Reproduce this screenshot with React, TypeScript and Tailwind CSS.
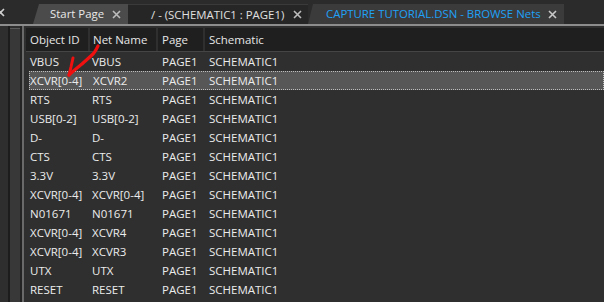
import React from "react";

type Row = { id: string; net: string; page: string; sch: string };

const rows: Row[] = [
  { id: "VBUS", net: "VBUS", page: "PAGE1", sch: "SCHEMATIC1" },
  { id: "XCVR[0-4]", net: "XCVR2", page: "PAGE1", sch: "SCHEMATIC1" },
  { id: "RTS", net: "RTS", page: "PAGE1", sch: "SCHEMATIC1" },
  { id: "USB[0-2]", net: "USB[0-2]", page: "PAGE1", sch: "SCHEMATIC1" },
  { id: "D-", net: "D-", page: "PAGE1", sch: "SCHEMATIC1" },
  { id: "CTS", net: "CTS", page: "PAGE1", sch: "SCHEMATIC1" },
  { id: "3.3V", net: "3.3V", page: "PAGE1", sch: "SCHEMATIC1" },
  { id: "XCVR[0-4]", net: "XCVR[0-4]", page: "PAGE1", sch: "SCHEMATIC1" },
  { id: "N01671", net: "N01671", page: "PAGE1", sch: "SCHEMATIC1" },
  { id: "XCVR[0-4]", net: "XCVR4", page: "PAGE1", sch: "SCHEMATIC1" },
  { id: "XCVR[0-4]", net: "XCVR3", page: "PAGE1", sch: "SCHEMATIC1" },
  { id: "UTX", net: "UTX", page: "PAGE1", sch: "SCHEMATIC1" },
  { id: "RESET", net: "RESET", page: "PAGE1", sch: "SCHEMATIC1" },
];

const Close = ({ className = "" }: { className?: string }) => (
  <svg width="9" height="9" viewBox="0 0 9 9" className={`shrink-0 ${className}`}>
    <path d="M1 1L8 8M8 1L1 8" stroke="currentColor" strokeWidth="1.6" />
  </svg>
);

const cols = "grid grid-cols-[62px_66px_45px_1fr]";

export default function App() {
  return (
    <div
      className="w-[604px] h-[302px] overflow-hidden bg-[#2d2d2d] text-[11.5px] flex flex-col"
      style={{ fontFamily: "'Open Sans', 'Noto Sans', sans-serif" }}
    >
      {/* tab strip */}
      <div className="h-[24px] flex items-end bg-[#2b2b2b] whitespace-nowrap">
        <div className="w-[33px] shrink-0 h-full flex items-start pt-[8px] text-[#cfcfcf]">
          <Close className="-ml-[4px]" />
        </div>
        <div className="h-[20px] w-[95px] shrink-0 bg-[#4b4b4b] flex items-center pl-[17px] pr-[6px] justify-between text-[#e8e8e8] [clip-path:polygon(6px_0,100%_0,100%_100%,0_100%)]">
          <span className="text-[11.4px]">Start Page</span>
          <Close className="text-[#bdbdbd] mr-[1px]" />
        </div>
        <div className="h-[20px] w-[180px] shrink-0 bg-[#262626] border-t border-[#3a3a3a] flex items-center pl-[23px] pr-[6px] justify-between text-[#e0e0e0]">
          <span className="text-[11.4px]">/ - (SCHEMATIC1 : PAGE1)</span>
          <Close className="text-[#bdbdbd]" />
        </div>
        <div className="h-[20px] w-[256px] shrink-0 bg-[#3b3b3b] flex items-center pl-[18px] pr-[7px] justify-between text-[#1ea1f7] [clip-path:polygon(5px_0,100%_0,100%_100%,0_100%)]">
          <span className="text-[11.4px]">CAPTURE TUTORIAL.DSN - BROWSE Nets</span>
          <Close className="text-[#c8c8c8]" />
        </div>
      </div>
      <div className="h-[2px] bg-[#8d8d8d]" />

      <div className="flex flex-1 min-h-0">
        {/* left docked panel edge */}
        <div className="w-[22px] flex bg-[#2e2e2e]">
          <div className="w-[8px]" />
          <div className="w-[2px] bg-[#1c1c1c]" />
          <div className="flex-1 bg-[#383838] border-t border-[#5a5a5a] mt-[2px]" />
          <div className="w-[2px] bg-[#242424]" />
        </div>

        {/* browse window */}
        <div className="flex-1 border-l-2 border-[#6a6a6a] bg-[#2f2f2f] pl-[2px] pt-[2px] flex flex-col">
          <div className={`${cols} h-[23px] gap-x-[2px] text-[#e6e6e6]`}>
            <div className="bg-[#1f1f1f] flex items-center pl-[4px]">Object ID</div>
            <div className="bg-[#1f1f1f] flex items-center pl-[3px]">Net Name</div>
            <div className="bg-[#1f1f1f] flex items-center pl-[4px]">Page</div>
            <div className="bg-[#1f1f1f] flex items-center pl-[4px]">Schematic</div>
          </div>
          <div className="h-[1px] bg-[#454545]" />
          <div className="relative flex flex-col">
            {rows.map((r, i) => (
              <div
                key={i}
                className={`${cols} gap-x-[2px] h-[19px] items-center text-[#ececec] ${
                  i === 1
                    ? "bg-[#575757] outline outline-1 outline-dotted outline-[#bdbdbd] -outline-offset-1 ml-[3px]"
                    : ""
                }`}
              >
                <div className={i === 1 ? "pl-[1px]" : "pl-[4px]"}>{r.id}</div>
                <div className={i === 1 ? "pl-[0px]" : "pl-[2px]"}>{r.net}</div>
                <div className={i === 1 ? "pl-[1px]" : "pl-[4px]"}>{r.page}</div>
                <div className={i === 1 ? "pl-[1px]" : "pl-[4px]"}>{r.sch}</div>
              </div>
            ))}
            {/* red annotation arrow */}
            <svg
              className="absolute left-0 top-[-10px] pointer-events-none"
              width="90"
              height="40"
              viewBox="0 0 90 40"
            >
              <path
                d="M72 4 C70 8 69 10 67 12 C63 16 59 19 56 22 C51 26 47 29 43 33"
                stroke="#f01010"
                strokeWidth="3.2"
                fill="none"
                strokeLinecap="round"
              />
              <path
                d="M47 16 L45 25 L43 33"
                stroke="#f01010"
                strokeWidth="3"
                fill="none"
                strokeLinecap="round"
              />
            </svg>
          </div>
        </div>
      </div>
    </div>
  );
}
